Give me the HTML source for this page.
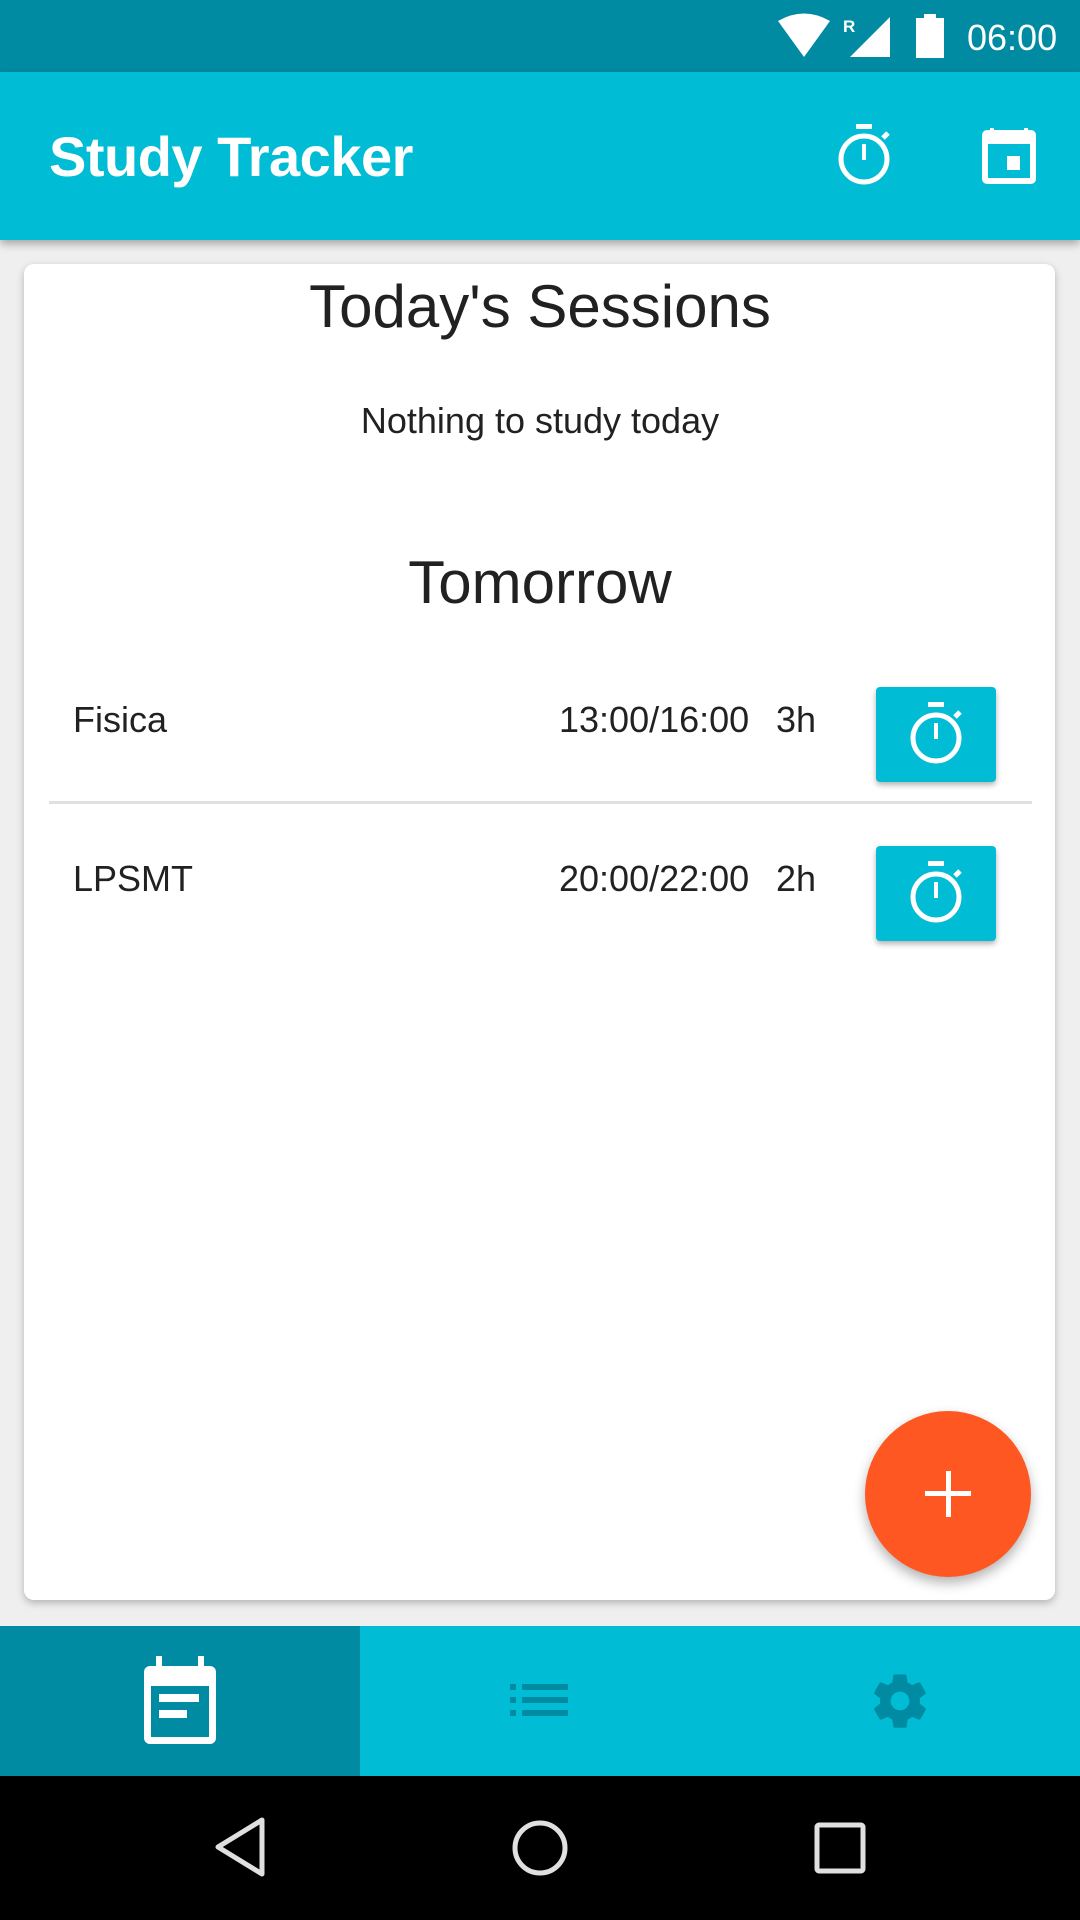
<!DOCTYPE html>
<html><head><meta charset="utf-8"><style>
*{margin:0;padding:0;box-sizing:border-box}
body{width:1080px;height:1920px;background:#efefef;font-family:"Liberation Sans",sans-serif;position:relative;overflow:hidden}
.abs{position:absolute}
.status{left:0;top:0;width:1080px;height:72px;background:#008ba3}
.bar{left:0;top:72px;width:1080px;height:168px;background:#00bcd4;box-shadow:0 4px 8px rgba(0,0,0,.3)}
.title{left:49px;top:124px;font-size:56px;font-weight:bold;color:#fff;letter-spacing:-0.5px}
.card{left:24px;top:264px;width:1031px;height:1336px;background:#fff;border-radius:10px;box-shadow:0 3px 8px rgba(0,0,0,.25)}
.c{width:1080px;left:0;text-align:center;color:#212121}
.row{font-size:36px;color:#212121}
.btn{width:120px;height:95px;background:#00bcd4;border-radius:4px;box-shadow:0 3px 6px rgba(0,0,0,.3)}
.fab{left:865px;top:1411px;width:166px;height:166px;border-radius:50%;background:#ff5722;box-shadow:0 6px 12px rgba(0,0,0,.3)}
.nav{left:0;top:1626px;width:1080px;height:150px;background:#00bcd4}
.sel{left:0;top:1626px;width:360px;height:150px;background:#008ba3}
.sys{left:0;top:1776px;width:1080px;height:144px;background:#000}
</style></head><body>
<div class="abs status"></div>
<svg class="abs" style="left:770px;top:12px" width="310" height="50">
<path d="M8 9 Q34 -6 60 9 L34 45 Z" fill="#fff"/>
<text x="73" y="20" font-size="17" font-family="Liberation Sans" fill="#fff" font-weight="bold">R</text>
<path d="M80 45 L120 5 L120 45 Z" fill="#fff"/>
<rect x="146" y="6" width="28" height="40" fill="#fff"/><rect x="154" y="2" width="12" height="5" fill="#fff"/>
<text x="197" y="38" font-size="36" font-family="Liberation Sans" fill="#fff">06:00</text>
</svg>
<div class="abs bar"></div>
<div class="abs title">Study Tracker</div>
<svg class="abs" style="left:834px;top:122px" width="60" height="64" viewBox="0 0 60 64">
<rect x="22" y="2" width="16" height="5" fill="#fff"/><circle cx="30" cy="37" r="23" fill="none" stroke="#fff" stroke-width="5"/>
<rect x="28" y="22" width="4" height="16" fill="#fff"/><path d="M49 16 L54 11" stroke="#fff" stroke-width="5"/></svg>
<svg class="abs" style="left:980px;top:122px" width="58" height="64" viewBox="0 0 58 64">
<rect x="2" y="8" width="54" height="54" rx="5" fill="#fff"/><rect x="10" y="6" width="4" height="8" fill="#fff"/><rect x="44" y="6" width="4" height="8" fill="#fff"/>
<rect x="8" y="22" width="42" height="34" fill="#00bcd4"/><rect x="27" y="34" width="13" height="14" fill="#fff"/></svg>
<div class="abs card"></div>
<div class="abs c" style="top:272px;font-size:60px">Today's Sessions</div>
<div class="abs c" style="top:400px;font-size:36px">Nothing to study today</div>
<div class="abs c" style="top:548px;font-size:60px">Tomorrow</div>
<div class="abs row" style="left:73px;top:699px">Fisica</div>
<div class="abs row" style="left:559px;top:699px">13:00/16:00</div>
<div class="abs row" style="left:776px;top:699px">3h</div>
<div class="abs btn" style="left:876px;top:687px"></div>
<div class="abs" style="left:49px;top:801px;width:983px;height:3px;background:#e0e0e0"></div>
<div class="abs row" style="left:73px;top:858px">LPSMT</div>
<div class="abs row" style="left:559px;top:858px">20:00/22:00</div>
<div class="abs row" style="left:776px;top:858px">2h</div>
<div class="abs btn" style="left:876px;top:846px"></div>
<svg class="abs" style="left:906px;top:700px" width="60" height="66" viewBox="0 0 60 66"><rect x="22" y="2" width="16" height="5" fill="#fff"/><circle cx="30" cy="38" r="23" fill="none" stroke="#fff" stroke-width="5"/><rect x="28" y="23" width="4" height="16" fill="#fff"/><path d="M49 17 L54 12" stroke="#fff" stroke-width="5"/></svg>
<svg class="abs" style="left:906px;top:859px" width="60" height="66" viewBox="0 0 60 66"><rect x="22" y="2" width="16" height="5" fill="#fff"/><circle cx="30" cy="38" r="23" fill="none" stroke="#fff" stroke-width="5"/><rect x="28" y="23" width="4" height="16" fill="#fff"/><path d="M49 17 L54 12" stroke="#fff" stroke-width="5"/></svg>
<div class="abs fab"></div>
<svg class="abs" style="left:925px;top:1471px" width="46" height="46"><rect x="21" y="0" width="5" height="46" fill="#fff"/><rect x="0" y="20" width="46" height="5" fill="#fff"/></svg>
<div class="abs nav"></div><div class="abs sel"></div>
<svg class="abs" style="left:142px;top:1656px" width="76" height="90" viewBox="0 0 76 90">
<rect x="2" y="10" width="72" height="78" rx="6" fill="#fff"/><rect x="14" y="0" width="6" height="14" fill="#fff"/><rect x="56" y="0" width="6" height="14" fill="#fff"/>
<rect x="9" y="30" width="58" height="51" fill="#008ba3"/><rect x="17" y="38" width="40" height="8" fill="#fff"/><rect x="17" y="54" width="28" height="8" fill="#fff"/></svg>
<svg class="abs" style="left:510px;top:1684px" width="60" height="34"><g fill="#008ba3"><rect x="0" y="0" width="6" height="6"/><rect x="0" y="13" width="6" height="6"/><rect x="0" y="26" width="6" height="6"/><rect x="12" y="0" width="46" height="6"/><rect x="12" y="13" width="46" height="6"/><rect x="12" y="26" width="46" height="6"/></g></svg>
<svg class="abs" style="left:868px;top:1669px" width="64" height="64" viewBox="0 0 24 24"><path fill="#008ba3" d="M19.4 13c.04-.3.06-.66.06-1s-.02-.7-.06-1l2.1-1.650c.2-.15.24-.42.12-.64l-2-3.46c-.12-.22-.4-.3-.6-.22l-2.5 1c-.52-.4-1.080-.73-1.690-.98l-.38-2.650A.49.49 0 0 0 14 2h-4c-.25 0-.46.18-.5.42l-.37 2.65c-.61.25-1.170.59-1.690.98l-2.490-1c-.23-.09-.49 0-.61.22l-2 3.46c-.13.22-.07.49.12.64L4.57 11c-.04.32-.07.66-.07 1s.03.68.07 1l-2.110 1.650c-.19.15-.24.42-.12.64l2 3.46c.12.22.39.3.61.22l2.490-1c.52.4 1.080.73 1.690.98l.37 2.650c.04.24.25.42.5.42h4c.25 0 .46-.18.49-.42l.38-2.650c.61-.25 1.170-.59 1.690-.98l2.490 1c.23.09.49 0 .61-.22l2-3.46c.12-.22.07-.49-.12-.64L19.4 13zM12 15.5A3.5 3.5 0 1 1 12 8.5a3.5 3.5 0 0 1 0 7z"/></svg>
<div class="abs sys"></div>
<svg class="abs" style="left:212px;top:1816px" width="56" height="62"><path d="M50 4 L50 58 L6 31 Z" fill="none" stroke="#e0e0e0" stroke-width="5" stroke-linejoin="round"/></svg>
<svg class="abs" style="left:510px;top:1818px" width="60" height="60"><circle cx="30" cy="30" r="25" fill="none" stroke="#e0e0e0" stroke-width="5"/></svg>
<svg class="abs" style="left:814px;top:1822px" width="52" height="52"><rect x="3" y="3" width="46" height="46" rx="2" fill="none" stroke="#e0e0e0" stroke-width="5"/></svg>
</body></html>
